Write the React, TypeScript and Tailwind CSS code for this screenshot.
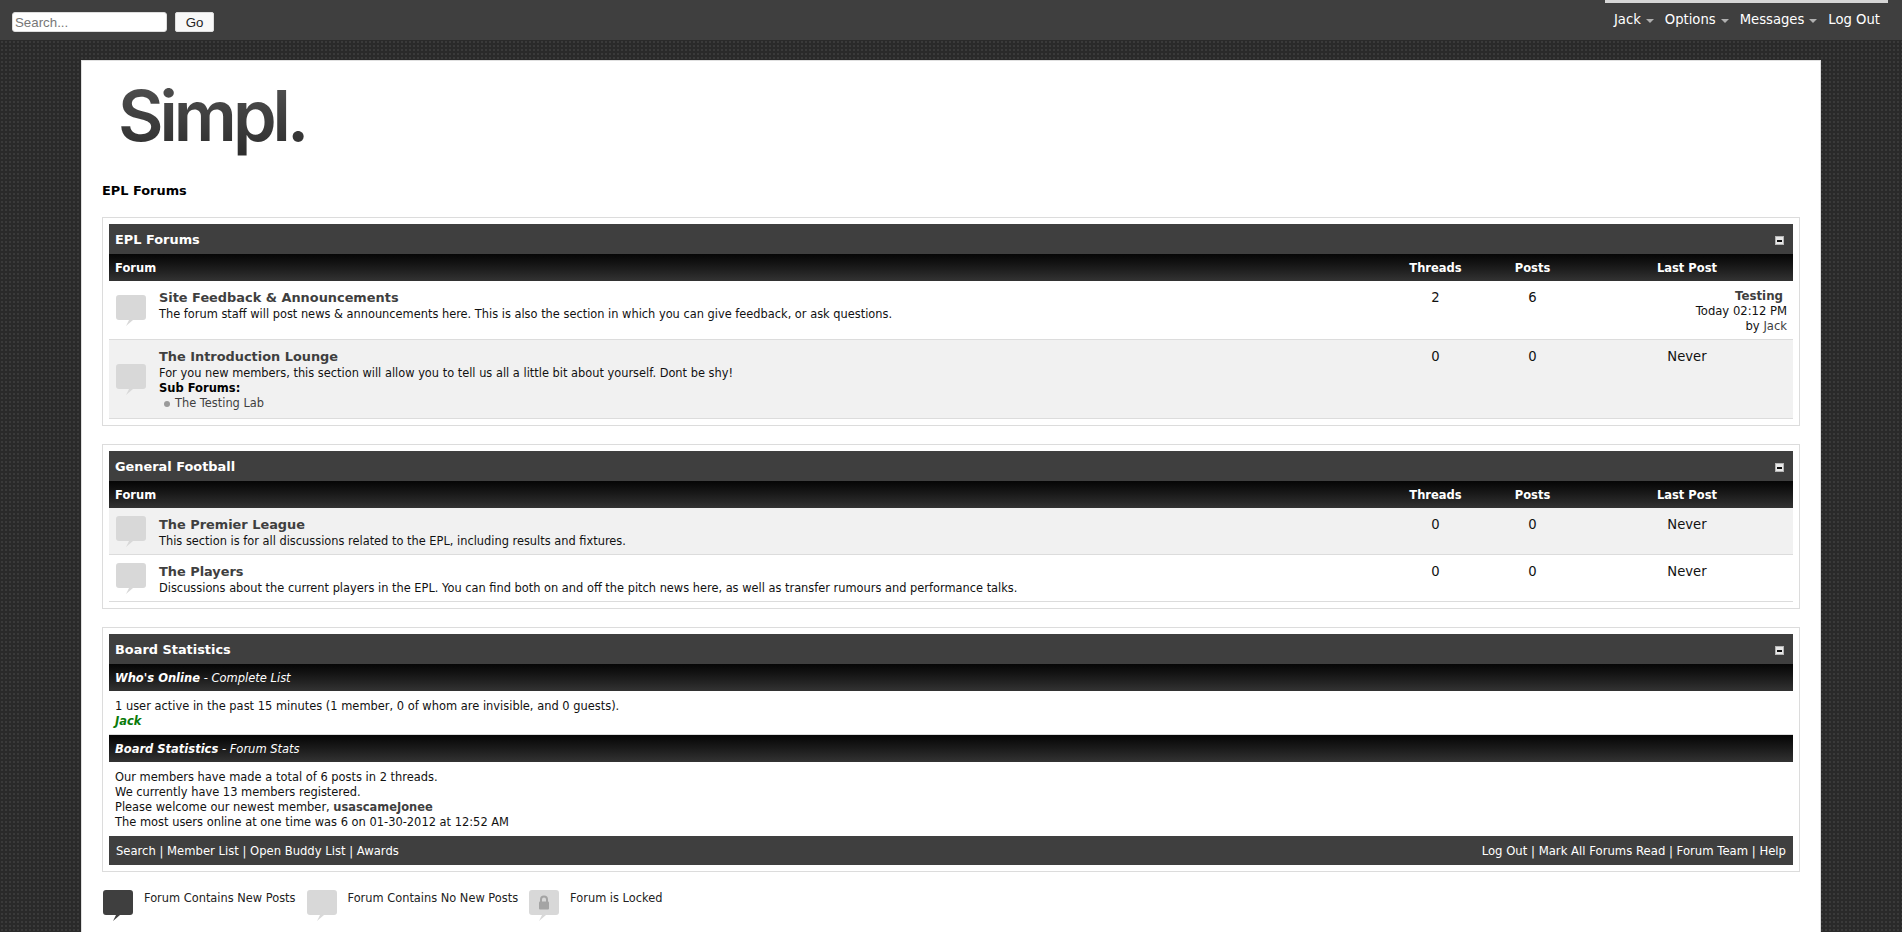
import React from "react";

const verdana = "font-['Verdana','DejaVu_Sans',sans-serif]";

// speech bubble forum icon
const Bubble = ({ dark, locked }: { dark?: boolean; locked?: boolean }) => (
  <svg width={30} height={31} viewBox="0 0 30 31" className="block shrink-0">
    <path
      d="M3 0h24a3 3 0 0 1 3 3v19a3 3 0 0 1-3 3H17l-7 6 3-6H3a3 3 0 0 1-3-3V3a3 3 0 0 1 3-3z"
      fill={dark ? "#3f3f3f" : "#d8d8d8"}
    />
    {locked && (
      <>
        <path d="M12 12V9.5a3 3 0 0 1 6 0V12" fill="none" stroke="#a4a4a4" strokeWidth="2" />
        <rect x="10" y="11.5" width="10" height="8" rx="1" fill="#a4a4a4" />
      </>
    )}
  </svg>
);

const Caret = () => (
  <span className="ml-[5px] mt-[2px] inline-block h-0 w-0 border-x-[4px] border-t-[4px] border-x-transparent border-t-[#b0b0b0]" />
);

const Collapse = () => (
  <span className="flex h-[9px] w-[9px] items-center justify-center border border-[#b5b5b5] bg-[#e8e8e8]">
    <span className="h-[2px] w-[5px] bg-[#111]" />
  </span>
);

const Header = ({ title }: { title: string }) => (
  <div className="flex h-[30px] items-center justify-between bg-[#3f3f3f] pl-[6px] pr-[9px]">
    <span className="pt-[1px] text-[12.9px] font-bold text-white">{title}</span>
    <span className="mt-[3px]">
      <Collapse />
    </span>
  </div>
);

const ColHead = () => (
  <div className="grid h-[27px] grid-cols-[1fr_97px_97px_212px] items-center bg-gradient-to-b from-[#060606] to-[#333] pt-[2px] text-[11.5px] font-bold text-white">
    <span className="pl-[6px]">Forum</span>
    <span className="text-center">Threads</span>
    <span className="text-center">Posts</span>
    <span className="text-center">Last Post</span>
  </div>
);

const Row = ({
  title,
  desc,
  threads,
  posts,
  alt,
  height,
  children,
  last,
}: {
  title: string;
  desc: string;
  threads: number;
  posts: number;
  alt?: boolean;
  height: string;
  children?: React.ReactNode;
  last?: React.ReactNode;
}) => (
  <div
    className={`grid grid-cols-[1fr_97px_97px_212px] border-b border-[#dcdcdc] ${height} ${alt ? "bg-[#f1f1f1]" : "bg-white"}`}
  >
    <div className="flex">
      <div className="flex w-[50px] shrink-0 items-center pl-[7px]">
        <Bubble />
      </div>
      <div className="pt-[8px]">
        <div className="text-[12.9px] font-bold leading-[18px] text-[#3f3f3f]">{title}</div>
        <div className="text-[11.4px] leading-[15px] text-[#111]">{desc}</div>
        {children}
      </div>
    </div>
    <div className="pt-[9px] text-center text-[13.2px] leading-[15px] text-[#111]">{threads}</div>
    <div className="pt-[9px] text-center text-[13.2px] leading-[15px] text-[#111]">{posts}</div>
    {last ?? <div className="pt-[9px] text-center text-[13.2px] leading-[15px] text-[#111]">Never</div>}
  </div>
);

const Box = ({ children }: { children: React.ReactNode }) => (
  <div className="border border-[#dcdcdc] p-[6px]">{children}</div>
);

export default function App() {
  return (
    <div
      className={`${verdana} min-h-[932px] overflow-hidden bg-[#2a2a2a] bg-[radial-gradient(#3a3a3a_35%,transparent_40%)] bg-[length:4px_4px]`}
    >
      {/* top bar */}
      <div className="flex h-[40px] items-start justify-between bg-[#3f3f3f] pl-[12px] pr-[14px]">
        <div className="flex items-center pt-[12px]">
          <input
            placeholder="Search..."
            className="h-[20px] w-[155px] rounded-[3px] border border-[#ddd] bg-white px-[2px] font-['Liberation_Sans',sans-serif] text-[13.3px] placeholder:text-[#777]"
          />
          <button className="ml-[8px] h-[20px] w-[39px] rounded-[2px] border border-[#ddd] bg-[#f8f8f8] font-['Liberation_Sans',sans-serif] text-[13.3px] text-[#222]">
            Go
          </button>
        </div>
        <div>
          <div className="ml-auto h-[3px] w-[283px] bg-[#d6d6d6]" />
          <div className="mt-[9px] flex items-center justify-end pr-[8px] text-[13.2px] leading-[15px] text-white">
            <span className="flex items-center">
              Jack
              <Caret />
            </span>
            <span className="ml-[11px] flex items-center">
              Options
              <Caret />
            </span>
            <span className="ml-[11px] flex items-center">
              Messages
              <Caret />
            </span>
            <span className="ml-[11px]">Log Out</span>
          </div>
        </div>
      </div>

      {/* page */}
      <div className="mx-[81px] mt-[20px] min-h-[872px] border-x border-t border-[#e0e0e0] bg-white px-[20px]">
        <div className="h-[122px] pl-[16px] pt-[10px]">
          <span className="bg-gradient-to-b from-[#555] to-[#2c2c2c] bg-clip-text font-['Inter',sans-serif] text-[70px] font-semibold leading-[90px] tracking-[-4px] text-transparent">
            Simpl.
          </span>
        </div>
        <div className="text-[12.9px] font-bold leading-[15px] text-black">EPL Forums</div>

        <div className="mt-[19px]">
          <Box>
            <Header title="EPL Forums" />
            <ColHead />
            <Row
              title="Site Feedback & Announcements"
              desc="The forum staff will post news & announcements here. This is also the section in which you can give feedback, or ask questions."
              threads={2}
              posts={6}
              height="h-[59px]"
              last={
                <div className="pr-[6px] pt-[8px] text-right text-[11.6px] leading-[15px] text-[#111]">
                  <div className="pr-[4px] text-[11.8px] font-bold text-[#3f3f3f]">Testing</div>
                  <div>Today 02:12 PM</div>
                  <div>
                    by <span className="text-[#3f3f3f]">Jack</span>
                  </div>
                </div>
              }
            />
            <Row
              title="The Introduction Lounge"
              desc="For you new members, this section will allow you to tell us all a little bit about yourself. Dont be shy!"
              threads={0}
              posts={0}
              alt
              height="h-[79px]"
            >
              <div className="text-[11.5px] font-bold leading-[15px] text-black">Sub Forums:</div>
              <div className="flex items-center pl-[5px] text-[11.4px] leading-[15px] text-[#3f3f3f]">
                <span className="mr-[5px] h-[6px] w-[6px] rounded-full bg-[#9a9a9a]" />
                The Testing Lab
              </div>
            </Row>
          </Box>
        </div>

        <div className="mt-[18px]">
          <Box>
            <Header title="General Football" />
            <ColHead />
            <Row
              title="The Premier League"
              desc="This section is for all discussions related to the EPL, including results and fixtures."
              threads={0}
              posts={0}
              alt
              height="h-[47px]"
            />
            <Row
              title="The Players"
              desc="Discussions about the current players in the EPL. You can find both on and off the pitch news here, as well as transfer rumours and performance talks."
              threads={0}
              posts={0}
              height="h-[47px]"
            />
          </Box>
        </div>

        <div className="mt-[18px]">
          <Box>
            <Header title="Board Statistics" />
            <div className="flex h-[27px] items-center bg-gradient-to-b from-[#060606] to-[#333] pl-[6px] pt-[2px] text-[11.5px] italic text-white">
              <b>Who's Online</b>&nbsp;- Complete List
            </div>
            <div className="h-[44px] border-b border-[#dcdcdc] pl-[6px] pt-[8px] text-[11.44px] leading-[15px] text-[#111]">
              <div>1 user active in the past 15 minutes (1 member, 0 of whom are invisible, and 0 guests).</div>
              <div className="font-bold italic text-[#0a7a0a]">Jack</div>
            </div>
            <div className="flex h-[27px] items-center bg-gradient-to-b from-[#060606] to-[#333] pl-[6px] pt-[2px] text-[11.5px] italic text-white">
              <b>Board Statistics</b>&nbsp;- Forum Stats
            </div>
            <div className="h-[74px] pl-[6px] pt-[8px] text-[11.44px] leading-[15px] text-[#111]">
              <div>Our members have made a total of 6 posts in 2 threads.</div>
              <div>We currently have 13 members registered.</div>
              <div>
                Please welcome our newest member, <b className="text-[#3f3f3f]">usascameJonee</b>
              </div>
              <div>The most users online at one time was 6 on 01-30-2012 at 12:52 AM</div>
            </div>
            <div className="flex h-[29px] items-center justify-between bg-[#3f3f3f] px-[7px] pt-[2px] text-[11.6px] text-white">
              <span>Search | Member List | Open Buddy List | Awards</span>
              <span className="text-[11.66px]">Log Out | Mark All Forums Read | Forum Team | Help</span>
            </div>
          </Box>
        </div>

        {/* legend */}
        <div className="ml-[1px] mt-[18px] flex text-[11.4px] leading-[15px] text-[#222]">
          <Bubble dark />
          <span className="ml-[11px] pt-[1px]">Forum Contains New Posts</span>
          <span className="ml-[11px]">
            <Bubble />
          </span>
          <span className="ml-[11px] pt-[1px]">Forum Contains No New Posts</span>
          <span className="ml-[11px]">
            <Bubble locked />
          </span>
          <span className="ml-[11px] pt-[1px]">Forum is Locked</span>
        </div>
      </div>
    </div>
  );
}
